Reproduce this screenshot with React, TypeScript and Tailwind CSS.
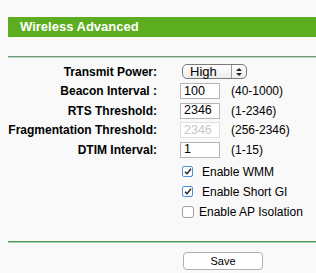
import React from "react";

const rows = [
  { label: "Transmit Power:", kind: "select", value: "High" },
  { label: "Beacon Interval :", kind: "input", value: "100", hint: "(40-1000)" },
  { label: "RTS Threshold:", kind: "input", value: "2346", hint: "(1-2346)" },
  { label: "Fragmentation Threshold:", kind: "disabled", value: "2346", hint: "(256-2346)" },
  { label: "DTIM Interval:", kind: "input", value: "1", hint: "(1-15)" },
];

const checks = [
  { label: "Enable WMM", checked: true },
  { label: "Enable Short GI", checked: true },
  { label: "Enable AP Isolation", checked: false },
];

function Select({ value }: { value: string }) {
  return (
    <div className="flex h-[15px] w-[65px] items-center rounded-[5px] border border-[#7a7a7a] bg-gradient-to-b from-white to-[#ececec] text-[13px] leading-none">
      <span className="flex-1 pl-[7px] text-black">{value}</span>
      <span className="flex h-full w-[15px] flex-col items-center justify-center gap-[2px] border-l border-[#9a9a9a]">
        <svg width="6" height="3" viewBox="0 0 6 3"><path d="M0 3 L3 0 L6 3 Z" fill="#222" /></svg>
        <svg width="6" height="3" viewBox="0 0 6 3"><path d="M0 0 L3 3 L6 0 Z" fill="#222" /></svg>
      </span>
    </div>
  );
}

function Field({ value, disabled }: { value: string; disabled?: boolean }) {
  return (
    <div
      className={
        disabled
          ? "flex h-[16px] w-[40px] items-center border border-[#e0e0e0] bg-white pl-[3px] text-[12.5px] text-[#c8c8c8]"
          : "flex h-[16px] w-[40px] items-center border border-[#b5b5b5] bg-white pl-[3px] text-[12.5px] text-black"
      }
    >
      {value}
    </div>
  );
}

function Check({ checked }: { checked: boolean }) {
  return checked ? (
    <span className="flex h-[11px] w-[11px] items-center justify-center rounded-[2px] border border-[#4a90e2] bg-white">
      <svg width="8" height="7" viewBox="0 0 8 7">
        <path d="M1 3.8 L3 5.8 L7 0.8" fill="none" stroke="#222" strokeWidth="1.4" />
      </svg>
    </span>
  ) : (
    <span className="h-[12px] w-[12px] rounded-[3px] border border-[#9c9c9c] bg-white" />
  );
}

export default function App() {
  return (
    <div className="h-[273px] w-[316px] overflow-hidden bg-[#f9f9f9] pl-2 pt-[17px] font-['Liberation_Sans',Arial,sans-serif]">
      <div className="flex h-5 items-center bg-[#5cad1f] pl-3 text-[13px] font-bold text-white">Wireless Advanced</div>

      <div className="mt-[19px] border-t border-b border-t-[#6f9a7a] border-b-[#bcd3c0]" />

      <div className="mt-[4px]">
        {rows.map((row) => (
          <div className="flex h-[19.5px] items-center" key={row.label}>
            <div className="w-[149px] text-right text-[12px] font-bold text-black">{row.label}</div>
            <div className="ml-[23px] flex items-center">
              {row.kind === "select" ? (
                <div className="ml-[2px]">
                  <Select value={row.value} />
                </div>
              ) : (
                <Field value={row.value} disabled={row.kind === "disabled"} />
              )}
              {row.hint && <span className="ml-[11px] text-[12px] text-black">{row.hint}</span>}
            </div>
          </div>
        ))}
      </div>

      <div className="mt-[2px]">
        {checks.map((c) => (
          <div className="flex h-5 items-center pl-[174px]" key={c.label}>
            <Check checked={c.checked} />
            <span className={c.checked ? "ml-[9px] text-[12px] text-black" : "ml-[5px] text-[12px] text-black"}>{c.label}</span>
          </div>
        ))}
      </div>

      <div className="mt-[19px] border-t border-b border-t-[#4f9b5c] border-b-[#a9cfb0]" />

      <div className="mt-[5px] pl-[175px]">
        <button className="h-[18px] w-[80px] rounded-[4px] border border-[#b0b0b0] bg-white text-[11px] text-black">Save</button>
      </div>
    </div>
  );
}
